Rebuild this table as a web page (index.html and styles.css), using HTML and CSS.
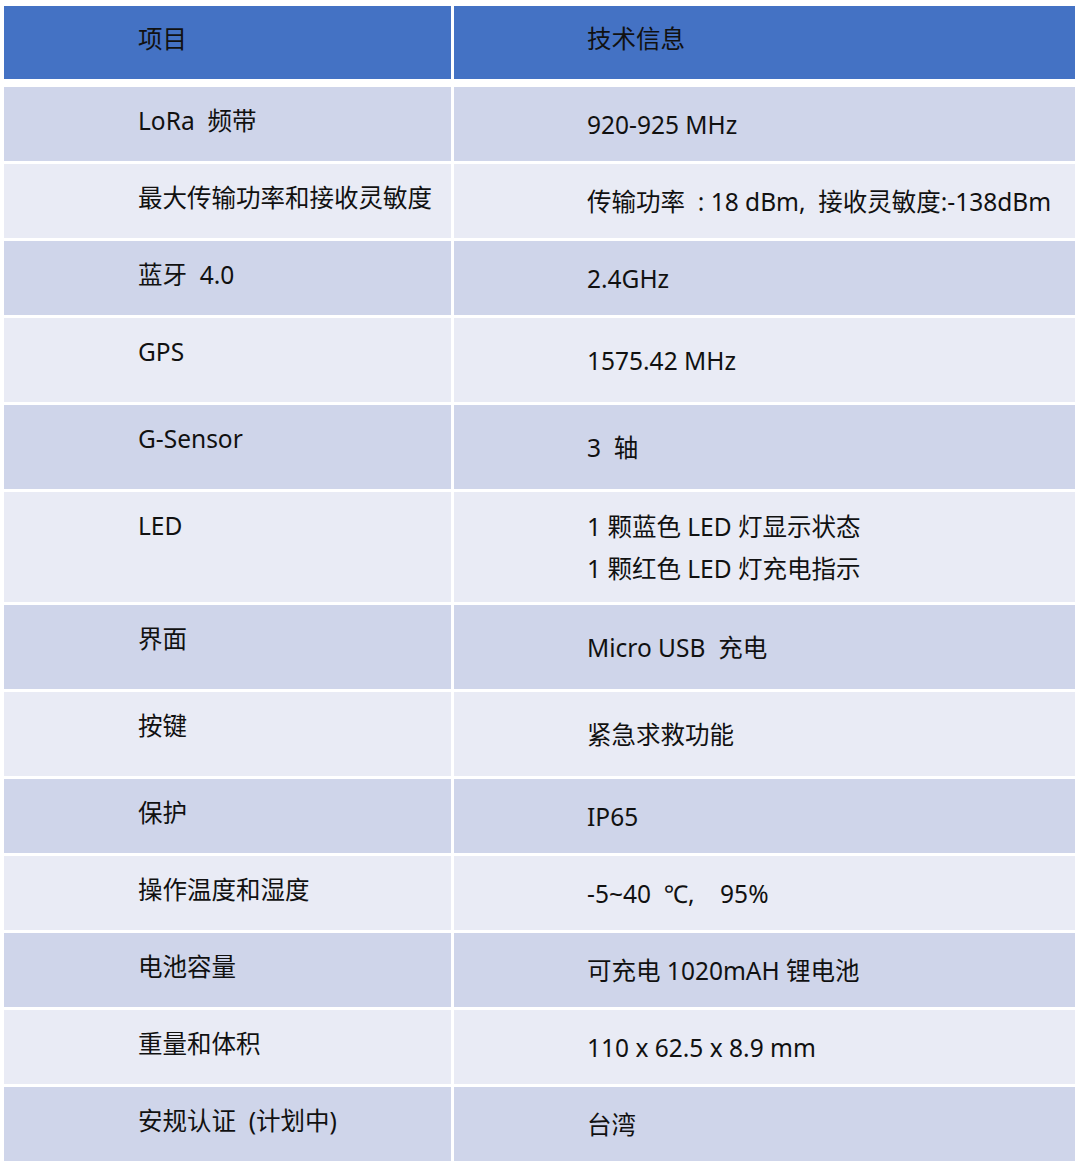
FILE: index.html
```html
<!DOCTYPE html>
<html lang="zh-CN">
<head>
<meta charset="utf-8">
<title>技术参数</title>
<link rel="stylesheet" href="styles.css">
</head>
<body>
<div class="spec">
  <div class="row head">
    <div class="cell key">项目</div>
    <div class="cell val">技术信息</div>
  </div>
  <div class="rows">
    <div class="row odd"><div class="cell key">LoRa&nbsp; 频带</div><div class="cell val">920-925 MHz</div></div>
    <div class="row even"><div class="cell key">最大传输功率和接收灵敏度</div><div class="cell val">传输功率&nbsp;&nbsp;:&nbsp;18 dBm,&nbsp; 接收灵敏度:-138dBm</div></div>
    <div class="row odd"><div class="cell key">蓝牙&nbsp; 4.0</div><div class="cell val">2.4GHz</div></div>
    <div class="row even tall"><div class="cell key">GPS</div><div class="cell val">1575.42 MHz</div></div>
    <div class="row odd tall"><div class="cell key">G-Sensor</div><div class="cell val">3&nbsp; 轴</div></div>
    <div class="row even led"><div class="cell key">LED</div><div class="cell val">1 颗蓝色 LED 灯显示状态<br>1 颗红色 LED 灯充电指示</div></div>
    <div class="row odd tall"><div class="cell key">界面</div><div class="cell val">Micro USB&nbsp; 充电</div></div>
    <div class="row even tall"><div class="cell key">按键</div><div class="cell val">紧急求救功能</div></div>
    <div class="row odd"><div class="cell key">保护</div><div class="cell val">IP65</div></div>
    <div class="row even"><div class="cell key">操作温度和湿度</div><div class="cell val">-5~40&nbsp; ℃,&nbsp;&nbsp;&nbsp; 95%</div></div>
    <div class="row odd"><div class="cell key">电池容量</div><div class="cell val">可充电 1020mAH 锂电池</div></div>
    <div class="row even"><div class="cell key">重量和体积</div><div class="cell val">110 x 62.5 x 8.9 mm</div></div>
    <div class="row odd"><div class="cell key">安规认证&nbsp; (计划中)</div><div class="cell val">台湾</div></div>
  </div>
</div>
</body>
</html>
```
FILE: styles.css
```css
html, body {
  margin: 0;
  padding: 0;
  background: #ffffff;
}
body {
  font-family: "Noto Sans", "Noto Sans CJK SC", sans-serif;
  font-size: 24.5px;
  color: #111111;
}
.spec {
  padding: 6px 0 0 4px;
  width: 1071px;
  display: flex;
  flex-direction: column;
  gap: 8px;
}
.rows {
  display: flex;
  flex-direction: column;
  gap: 3px;
}
.row {
  display: grid;
  grid-template-columns: 447px 621px;
  column-gap: 3px;
  height: 74px;
}
.row.tall { height: 84px; }
.row.led { height: 110px; }
.row.head { height: 73px; }
.cell {
  line-height: 34px;
  white-space: nowrap;
}
.key {
  padding: 17px 0 0 134px;
}
.val {
  padding-left: 133px;
  padding-top: 2px;
  display: flex;
  align-items: center;
  line-height: 42px;
}
.head .cell {
  background: #4472c4;
  display: flex;
  align-items: center;
  padding-top: 0;
  padding-bottom: 8px;
}
.odd .cell { background: #cfd5ea; }
.even .cell { background: #e9ebf5; }
```
